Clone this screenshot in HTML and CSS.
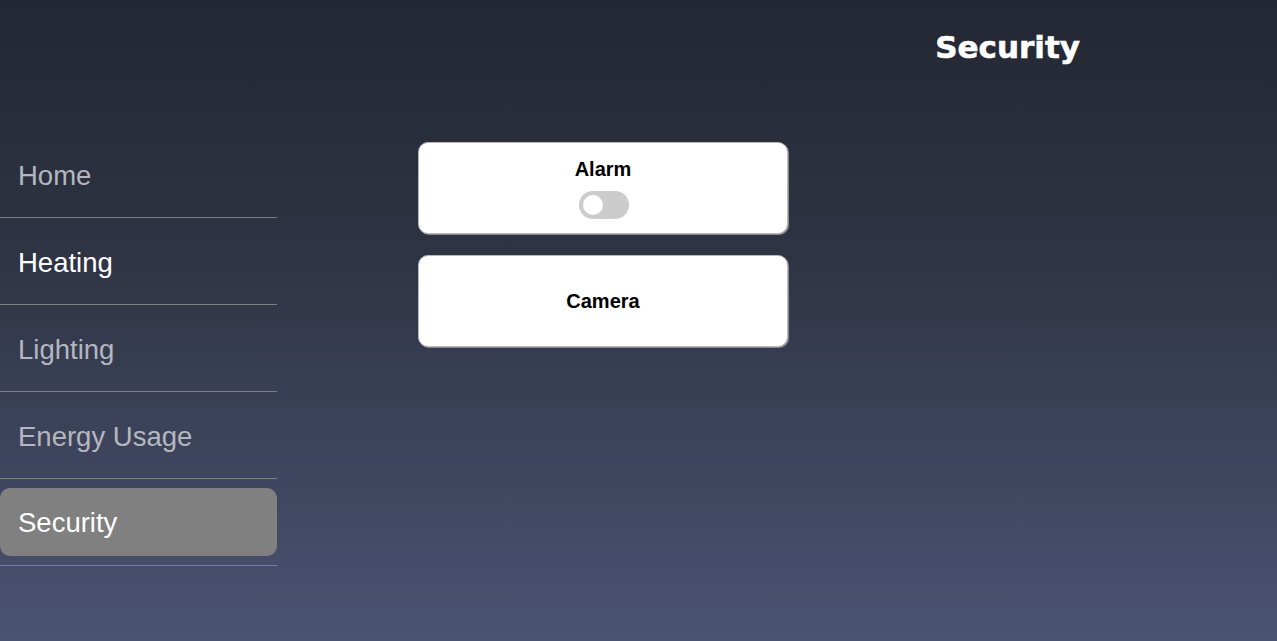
FILE: index.html
```html
<!DOCTYPE html>
<html lang="en">
<head>
<meta charset="utf-8">
<title>Security</title>
<link rel="stylesheet" href="styles.css">
</head>
<body>
<div class="page">
  <header class="topbar">
    <h1 class="title">Security</h1>
  </header>
  <div class="layout">
    <nav class="sidebar">
      <ul class="menu">
        <li class="menu-item"><a class="menu-link">Home</a></li>
        <li class="menu-item"><a class="menu-link bright">Heating</a></li>
        <li class="menu-item"><a class="menu-link">Lighting</a></li>
        <li class="menu-item"><a class="menu-link">Energy Usage</a></li>
        <li class="menu-item"><a class="menu-link active">Security</a></li>
      </ul>
    </nav>
    <main class="main">
      <div class="card">
        <div class="card-title">Alarm</div>
        <label class="switch"><span class="knob"></span></label>
      </div>
      <div class="card">
        <div class="card-title">Camera</div>
      </div>
    </main>
  </div>
</div>
</body>
</html>
```
FILE: styles.css
```css
html, body {
  margin: 0;
  padding: 0;
  height: 100%;
}
body {
  background: linear-gradient(to bottom, #232733 0%, #2f3444 40%, #4b5373 100%);
  font-family: "Liberation Sans", Arial, sans-serif;
  color: #fff;
  overflow: hidden;
}
.page {
  min-height: 641px;
}
.topbar {
  height: 131px;
  display: flex;
  justify-content: flex-end;
  padding-right: 197px;
}
.title {
  margin: 0;
  padding-top: 29px;
  font-family: "DejaVu Sans", sans-serif;
  font-weight: bold;
  font-size: 31px;
  line-height: 36px;
  color: #fff;
  -webkit-text-stroke: 0.6px #fff;
}
.layout {
  display: grid;
  grid-template-columns: 277px 1fr;
}
.menu {
  list-style: none;
  margin: 0;
  padding: 0;
}
.menu-item {
  padding: 9px 0 8px;
  border-bottom: 1px solid #7d7f82;
}
.menu-link {
  display: flex;
  align-items: center;
  box-sizing: border-box;
  height: 69px;
  padding: 2px 0 0 18px;
  font-size: 27.5px;
  color: #b5b7bf;
  border-radius: 10px;
}
.menu-link.bright {
  color: #ffffff;
}
.menu-link.active {
  background: #808080;
  color: #ffffff;
  height: 68px;
}
.menu-item:last-child {
  padding-bottom: 9px;
}
.main {
  padding: 11px 0 0 141px;
  display: flex;
  flex-direction: column;
  gap: 21px;
}
.card {
  width: 370px;
  height: 92px;
  box-sizing: border-box;
  background: #fff;
  border: 1px solid #b8b8bc;
  border-radius: 10px;
  box-shadow: 1px 1px 0 #8a8a90;
  display: flex;
  flex-direction: column;
  align-items: center;
  justify-content: center;
  gap: 10px;
}
.card-title {
  font-weight: bold;
  font-size: 20px;
  line-height: 23px;
  color: #000;
}
.switch {
  position: relative;
  display: block;
  width: 50px;
  height: 28px;
  margin-left: 2px;
  border-radius: 14px;
  background: #cccccc;
}
.knob {
  position: absolute;
  left: 4px;
  top: 4px;
  width: 20px;
  height: 20px;
  border-radius: 50%;
  background: #fff;
}
```
